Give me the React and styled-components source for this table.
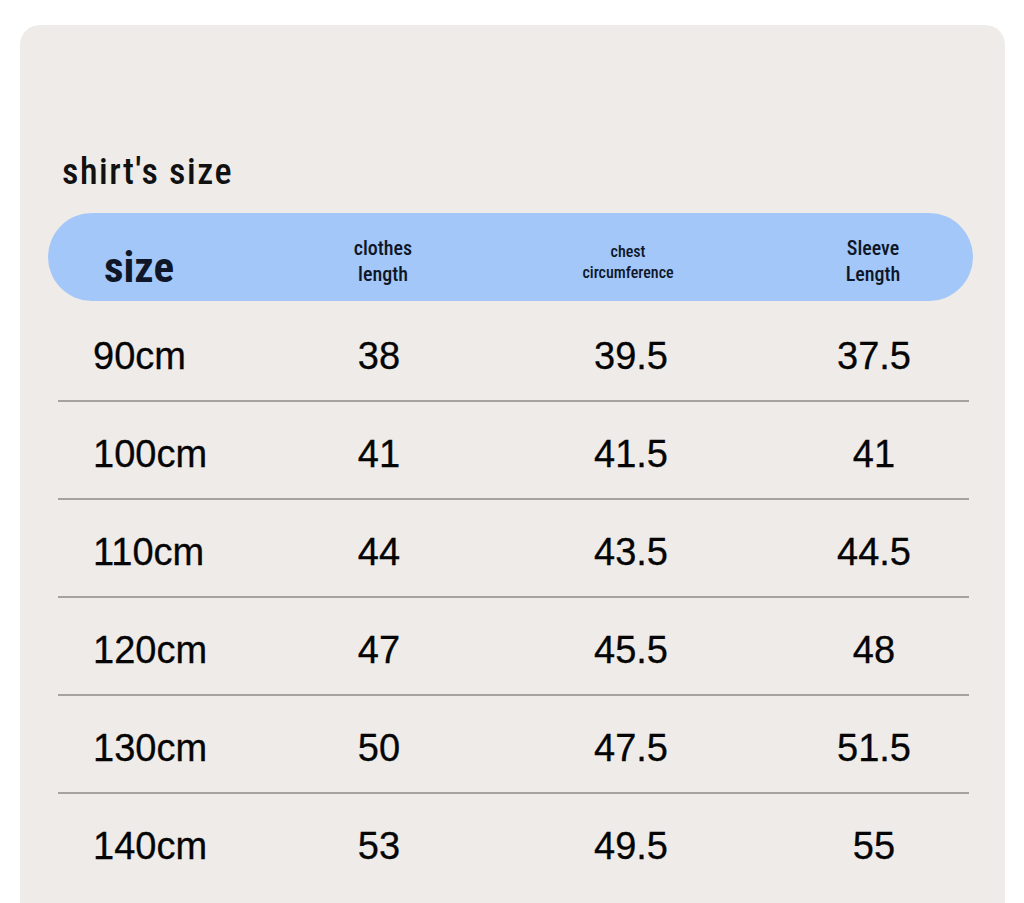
import styled, { createGlobalStyle } from 'styled-components'

const GlobalStyle = createGlobalStyle`
  html, body {
    margin: 0;
    padding: 0;
    background: #ffffff;
  }
  * {
    box-sizing: border-box;
  }
`

const rows = [
  { size: '90cm', length: '38', chest: '39.5', sleeve: '37.5' },
  { size: '100cm', length: '41', chest: '41.5', sleeve: '41' },
  { size: '110cm', length: '44', chest: '43.5', sleeve: '44.5' },
  { size: '120cm', length: '47', chest: '45.5', sleeve: '48' },
  { size: '130cm', length: '50', chest: '47.5', sleeve: '51.5' },
  { size: '140cm', length: '53', chest: '49.5', sleeve: '55' },
]

const condensed = `"Roboto Condensed", "DejaVu Sans Condensed", "Liberation Sans Narrow", Roboto, sans-serif`

function App() {
  return (
    <>
      <GlobalStyle />
      <Card>
        <Title>shirt's size</Title>
        <HeaderBar>
          <SizeHead>size</SizeHead>
          <HeadCell>clothes<br />length</HeadCell>
          <HeadCell $small>chest<br />circumference</HeadCell>
          <HeadCell>Sleeve<br />Length</HeadCell>
        </HeaderBar>
        <Body>
          {rows.map((r, i) => (
            <Row key={r.size} $last={i === rows.length - 1}>
              <SizeCell>{r.size}</SizeCell>
              <Cell>{r.length}</Cell>
              <Cell>{r.chest}</Cell>
              <Cell>{r.sleeve}</Cell>
            </Row>
          ))}
        </Body>
      </Card>
    </>
  )
}

export default App

const Card = styled.div`
  margin: 25px 19px 0 20px;
  min-height: 878px;
  padding: 130px 32px 0 28px;
  background: #eeebe8;
  border-radius: 20px 20px 0 0;
`

const Title = styled.h1`
  margin: 0 0 24px 14px;
  font-family: ${condensed};
  font-stretch: condensed;
  font-weight: 500;
  font-size: 36px;
  line-height: 34px;
  letter-spacing: 1.5px;
  color: #111111;
`

const HeaderBar = styled.div`
  display: grid;
  grid-template-columns: 235px 200px 290px 200px;
  align-items: center;
  height: 88px;
  border-radius: 44px;
  background: #a2c7f8;
  color: #0e1628;
  font-family: ${condensed};
  font-stretch: condensed;
`

const SizeHead = styled.div`
  padding: 20px 0 0 56px;
  font-size: 43px;
  font-weight: 700;
  line-height: 46px;
`

const HeadCell = styled.div`
  text-align: center;
  font-weight: 500;
  font-size: ${(p) => (p.$small ? '16px' : '20px')};
  line-height: ${(p) => (p.$small ? '21px' : '26px')};
  padding-top: ${(p) => (p.$small ? '10px' : '8px')};
`

const Body = styled.div`
  margin: 3px 4px 0 10px;
`

const Row = styled.div`
  display: grid;
  grid-template-columns: 217px 208px 296px 190px;
  align-items: center;
  height: 98px;
  padding-top: 8px;
  border-bottom: 2px solid ${(p) => (p.$last ? 'transparent' : '#a5a3a0')};
  font-family: "Liberation Sans", Arial, sans-serif;
  font-size: 38px;
  line-height: 1;
  color: #050505;
  -webkit-text-stroke: 0.3px #050505;
`

const SizeCell = styled.div`
  padding-left: 35px;
`

const Cell = styled.div`
  text-align: center;
`
